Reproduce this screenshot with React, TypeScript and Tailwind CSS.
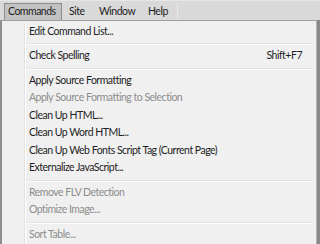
import React from "react";

type Item = { label: string; shortcut?: string; disabled?: boolean } | "sep";

const items: Item[] = [
  { label: "Edit Command List..." },
  "sep",
  { label: "Check Spelling", shortcut: "Shift+F7" },
  "sep",
  { label: "Apply Source Formatting" },
  { label: "Apply Source Formatting to Selection", disabled: true },
  { label: "Clean Up HTML..." },
  { label: "Clean Up Word HTML..." },
  { label: "Clean Up Web Fonts Script Tag (Current Page)" },
  { label: "Externalize JavaScript..." },
  "sep",
  { label: "Remove FLV Detection", disabled: true },
  { label: "Optimize Image...", disabled: true },
  "sep",
  { label: "Sort Table...", disabled: true },
];

export default function App() {
  return (
    <div
      className="w-[320px] h-[244px] overflow-hidden bg-[#f0f0f0] text-[10.5px] tracking-[-0.5px] text-[#1e1e1e]"
      style={{ fontFamily: "Lato, 'Open Sans', sans-serif" }}
    >
      {/* menu bar */}
      <div className="h-[20px] flex items-end bg-[#d9d9d9] border-t border-[#e6e6e6]">
        <div className="ml-[4px] h-[17px] w-[58px] shrink-0 flex items-center pl-[3px] bg-[#c2c2c2] border border-b-0 border-[#8e8e8e]">
          Commands
        </div>
        <div className="h-[17px] w-[37px] shrink-0 flex items-center pl-[7px]">Site</div>
        <div className="h-[17px] w-[49px] shrink-0 flex items-center">Window</div>
        <div className="h-[17px] w-[29px] shrink-0 flex items-center">Help</div>
        <div className="h-[17px] w-px bg-[#c4c4c4] border-r border-[#e8e8e8]" />
      </div>

      {/* dropdown */}
      <div className="flex h-[224px]">
        <div className="flex-1 flex border-l-2 border-[#8e8e8e] border-t border-t-[#a0a0a0] bg-[#f0f0f0] pt-[2px]">
          <div className="w-[22px] shrink-0" />
          <div className="w-px bg-[#e2e2e2]" />
          <div className="w-px bg-white" />
          <div className="flex-1 flex flex-col">
            {items.map((it, i) =>
              it === "sep" ? (
                <div key={i} className="h-[7px] flex flex-col justify-center pr-[2px]">
                  <div className="h-px bg-[#e2e2e2]" />
                  <div className="h-px bg-white" />
                </div>
              ) : (
                <div
                  key={i}
                  className={`h-[17.5px] flex items-center pl-[3px] pr-[14px] ${
                    it.disabled ? "text-[#8d8d8d]" : ""
                  }`}
                >
                  <span className="flex-1 whitespace-nowrap">{it.label}</span>
                  {it.shortcut && <span>{it.shortcut}</span>}
                </div>
              )
            )}
          </div>
        </div>
        <div className="w-[4px] bg-[#8a8a8a] border-l border-[#b0b0b0]" />
      </div>
    </div>
  );
}
